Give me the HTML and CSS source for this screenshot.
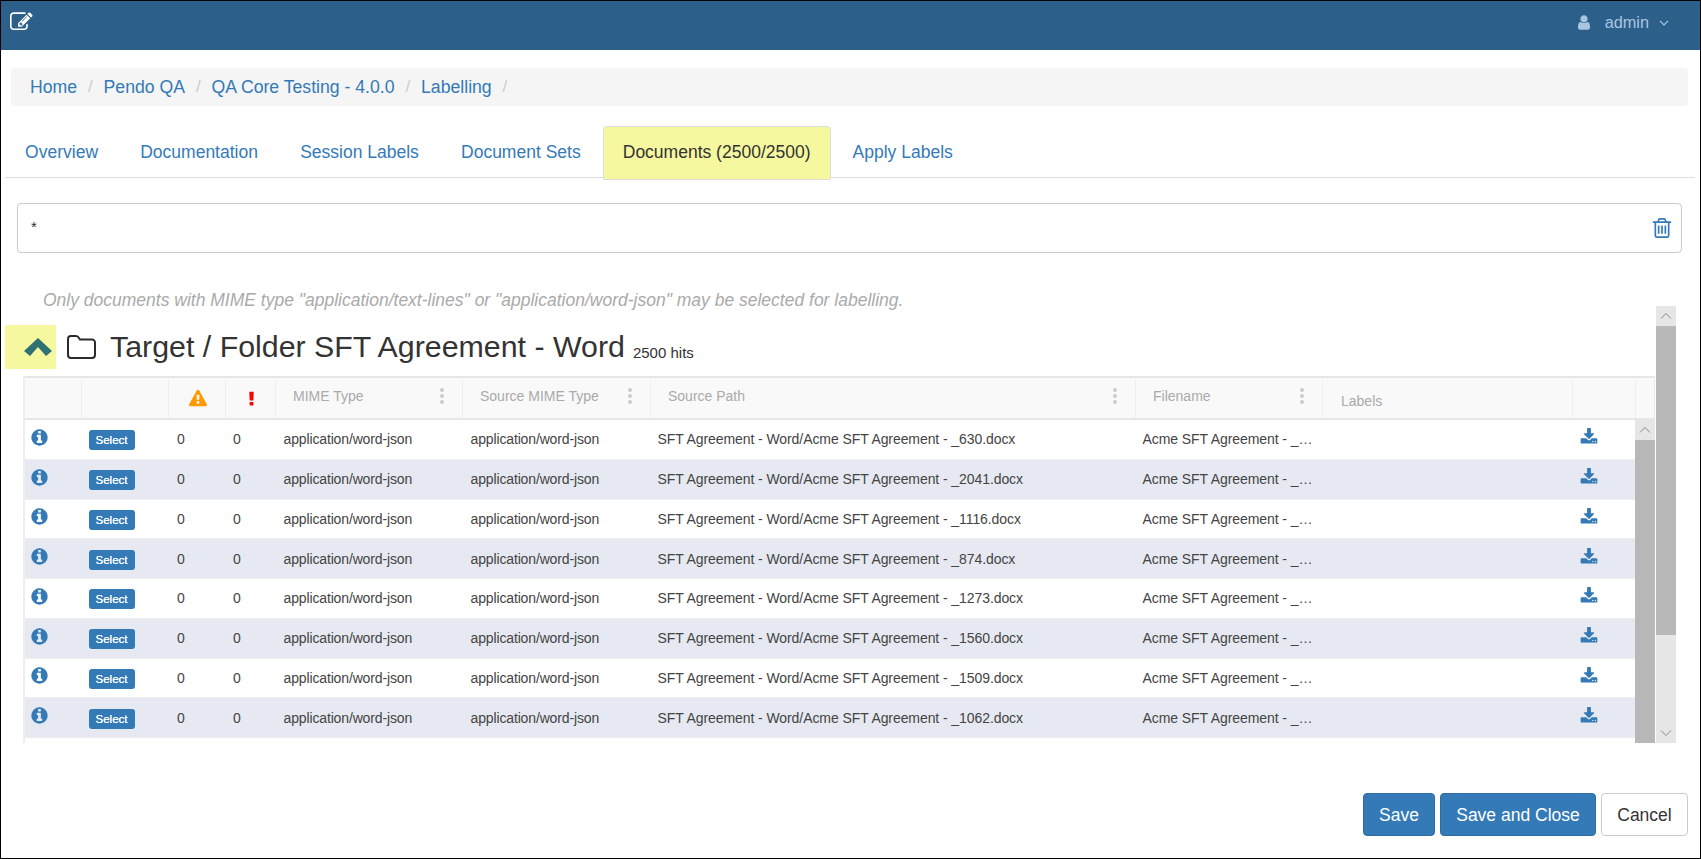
FILE: index.html
```html
<!DOCTYPE html>
<html lang="en">
<head>
<meta charset="utf-8">
<title>Labelling</title>
<link rel="stylesheet" href="styles.css">
</head>
<body>
<svg class="defs" aria-hidden="true">
  <symbol id="i-info" viewBox="0 0 1792 1792"><path d="M1152 1376v-160q0-14-9-23t-23-9h-96v-512q0-14-9-23t-23-9h-320q-14 0-23 9t-9 23v160q0 14 9 23t23 9h96v320h-96q-14 0-23 9t-9 23v160q0 14 9 23t23 9h448q14 0 23-9t9-23zm-128-896v-160q0-14-9-23t-23-9h-192q-14 0-23 9t-9 23v160q0 14 9 23t23 9h192q14 0 23-9t9-23zm640 416q0 209-103 385.5t-279.5 279.5-385.5 103-385.5-103-279.5-279.5-103-385.5 103-385.5 279.5-279.5 385.5-103 385.5 103 279.5 279.5 103 385.5z"/></symbol>
  <symbol id="i-down" viewBox="0 0 1792 1792"><path d="M1344 1344q0-26-19-45t-45-19-45 19-19 45 19 45 45 19 45-19 19-45zm256 0q0-26-19-45t-45-19-45 19-19 45 19 45 45 19 45-19 19-45zm128-224v320q0 40-28 68t-68 28h-1472q-40 0-68-28t-28-68v-320q0-40 28-68t68-28h465l135 136q58 56 136 56t136-56l136-136h464q40 0 68 28t28 68zm-325-569q17 41-14 70l-448 448q-18 19-45 19t-45-19l-448-448q-31-29-14-70 17-39 59-39h256v-448q0-26 19-45t45-19h256q26 0 45 19t19 45v448h256q42 0 59 39z"/></symbol>
  <symbol id="i-kebab" viewBox="0 0 6 18"><circle cx="3" cy="3" r="2"/><circle cx="3" cy="9" r="2"/><circle cx="3" cy="15" r="2"/></symbol>
  <symbol id="i-up" viewBox="0 0 12 8"><path d="M1 6.5 6 1.5l5 5" fill="none" stroke="currentColor" stroke-width="1"/></symbol>
  <symbol id="i-dn" viewBox="0 0 12 8"><path d="M1 1.5 6 6.5l5-5" fill="none" stroke="currentColor" stroke-width="1"/></symbol>
</svg>
<div class="frame">
  <header class="topbar">
    <svg class="ic-edit" viewBox="0 128 1900 1536"><path d="M888 1184l116-116-152-152-116 116v56h96v96h56zm440-720q-16-16-33 1l-350 350q-17 17-1 33t33-1l350-350q17-17 1-33zm80 594v190q0 119-84.5 203.5t-203.5 84.5h-832q-119 0-203.5-84.5t-84.5-203.5v-832q0-119 84.5-203.5t203.5-84.5h832q63 0 117 25 15 7 18 23 3 17-9 29l-49 49q-14 14-32 8-23-6-45-6h-832q-66 0-113 47t-47 113v832q0 66 47 113t113 47h832q66 0 113-47t47-113v-126q0-13 9-22l64-64q15-15 35-7t20 29zm-96-738l288 288-672 672h-288v-288zm444 132l-92 92-288-288 92-92q28-28 68-28t68 28l152 152q28 28 28 68t-28 68z"/></svg>
    <div class="user">
      <svg class="ic-user" viewBox="256 128 1280 1536"><path d="M1536 1399q0 109-62.5 187t-150.5 78h-854q-88 0-150.5-78t-62.5-187q0-85 8.5-160.5t31.5-152 58.5-131 94-89 134.5-34.5q131 128 313 128t313-128q76 0 134.5 34.5t94 89 58.5 131 31.5 152 8.5 160.5zm-256-887q0 159-112.5 271.5t-271.5 112.5-271.5-112.5-112.5-271.5 112.5-271.5 271.5-112.5 271.5 112.5 112.5 271.5z"/></svg>
      <span class="user-name">admin</span>
      <svg class="ic-caret" viewBox="0 0 10 6"><path d="M1 1 5 5l4-4" fill="none" stroke="currentColor" stroke-width="1.1"/></svg>
    </div>
  </header>

  <nav class="crumbs">
    <a class="crumb">Home</a><span class="sep">/</span>
    <a class="crumb">Pendo QA</a><span class="sep">/</span>
    <a class="crumb">QA Core Testing - 4.0.0</a><span class="sep">/</span>
    <a class="crumb">Labelling</a><span class="sep">/</span>
  </nav>

  <div class="tabs">
    <a class="tab">Overview</a>
    <a class="tab">Documentation</a>
    <a class="tab">Session Labels</a>
    <a class="tab">Document Sets</a>
    <a class="tab tab-active">Documents (2500/2500)</a>
    <a class="tab">Apply Labels</a>
  </div>

  <div class="query">
    <span class="query-text">*</span>
    <svg class="ic-trash" viewBox="128 128 1536 1536"><path d="M704 736v576q0 14-9 23t-23 9h-64q-14 0-23-9t-9-23v-576q0-14 9-23t23-9h64q14 0 23 9t9 23zm256 0v576q0 14-9 23t-23 9h-64q-14 0-23-9t-9-23v-576q0-14 9-23t23-9h64q14 0 23 9t9 23zm256 0v576q0 14-9 23t-23 9h-64q-14 0-23-9t-9-23v-576q0-14 9-23t23-9h64q14 0 23 9t9 23zm128 724v-948h-896v948q0 22 7 40.5t14.5 27 10.5 8.5h832q3 0 10.5-8.5t14.5-27 7-40.5zm-672-1076h448l-48-117q-7-9-17-11h-317q-10 2-17 11zm928 32v64q0 14-9 23t-23 9h-96v948q0 83-47 143.5t-113 60.5h-832q-66 0-113-58.5t-47-141.5v-952h-96q-14 0-23-9t-9-23v-64q0-14 9-23t23-9h309l70-167q15-37 54-63t79-26h320q40 0 79 26t54 63l70 167h309q14 0 23 9t9 23z"/></svg>
  </div>

  <p class="note">Only documents with MIME type "application/text-lines" or "application/word-json" may be selected for labelling.</p>

  <div class="results">
    <div class="results-main">
      <div class="section-head">
        <div class="toggle"><svg class="ic-chevron" viewBox="0 0 28 18"><path d="M0 13 14 0l14 13-6 5-8-9-8 9z"/></svg></div>
        <svg class="ic-folder" viewBox="0 0 29 24"><path d="M1 4a3 3 0 0 1 3-3h5c1.5 0 2.5 1 3 2l1 1.500h12a3 3 0 0 1 3 3V20a3 3 0 0 1-3 3H4a3 3 0 0 1-3-3z" fill="none" stroke="currentColor" stroke-width="2"/></svg>
        <h2 class="title">Target / Folder SFT Agreement - Word</h2>
        <span class="hits">2500 hits</span>
      </div>

      <div class="grid">
        <div class="grid-head">
          <div class="th"></div>
          <div class="th"></div>
          <div class="th th-icon"><svg class="ic-warn" viewBox="0 64 1792 1664"><path d="M1024 1375v-190q0-14-9.5-23.5t-22.5-9.5h-192q-13 0-22.5 9.5t-9.5 23.5v190q0 14 9.5 23.5t22.5 9.5h192q13 0 22.5-9.5t9.5-23.5zm-2-374l18-459q0-12-10-19-13-11-24-11h-220q-11 0-24 11-10 7-10 21l17 457q0 10 10 16.5t24 6.5h185q14 0 23.5-6.5t10.5-16.5zm-14-934l768 1408q35 63-2 126-17 29-46.5 46t-63.5 17h-1536q-34 0-63.5-17t-46.5-46q-37-63-2-126l768-1408q17-31 47-49t65-18 65 18 47 49z"/></svg></div>
          <div class="th th-icon"><svg class="ic-bang" viewBox="640 128 512 1408"><path d="M1088 1248v224q0 26-19 45t-45 19h-256q-26 0-45-19t-19-45v-224q0-26 19-45t45-19h256q26 0 45 19t19 45zm30-1056l-28 768q-1 26-20.5 45t-45.5 19h-256q-26 0-45.5-19t-20.5-45l-28-768q-1-26 17.5-45t44.5-19h320q26 0 44.5 19t17.5 45z"/></svg></div>
          <div class="th th-col"><span>MIME Type</span><svg class="ic-kebab"><use href="#i-kebab"/></svg></div>
          <div class="th th-col"><span>Source MIME Type</span><svg class="ic-kebab"><use href="#i-kebab"/></svg></div>
          <div class="th th-col"><span>Source Path</span><svg class="ic-kebab"><use href="#i-kebab"/></svg></div>
          <div class="th th-col"><span>Filename</span><svg class="ic-kebab"><use href="#i-kebab"/></svg></div>
          <div class="th th-labels">Labels</div>
          <div class="th"></div>
          <div class="th"></div>
        </div>
        <div class="grid-body">
          <div class="rows">
            <div class="row"><span class="c c-info"><svg class="ic-info"><use href="#i-info"/></svg></span><span class="c"><a class="select">Select</a></span><span class="c c-n">0</span><span class="c c-n2">0</span><span class="c">application/word-json</span><span class="c">application/word-json</span><span class="c c-path">SFT Agreement - Word/Acme SFT Agreement - _630.docx</span><span class="c c-name">Acme SFT Agreement - _…</span><span class="c"></span><span class="c c-dl"><svg class="ic-down"><use href="#i-down"/></svg></span></div>
            <div class="row"><span class="c c-info"><svg class="ic-info"><use href="#i-info"/></svg></span><span class="c"><a class="select">Select</a></span><span class="c c-n">0</span><span class="c c-n2">0</span><span class="c">application/word-json</span><span class="c">application/word-json</span><span class="c c-path">SFT Agreement - Word/Acme SFT Agreement - _2041.docx</span><span class="c c-name">Acme SFT Agreement - _…</span><span class="c"></span><span class="c c-dl"><svg class="ic-down"><use href="#i-down"/></svg></span></div>
            <div class="row"><span class="c c-info"><svg class="ic-info"><use href="#i-info"/></svg></span><span class="c"><a class="select">Select</a></span><span class="c c-n">0</span><span class="c c-n2">0</span><span class="c">application/word-json</span><span class="c">application/word-json</span><span class="c c-path">SFT Agreement - Word/Acme SFT Agreement - _1116.docx</span><span class="c c-name">Acme SFT Agreement - _…</span><span class="c"></span><span class="c c-dl"><svg class="ic-down"><use href="#i-down"/></svg></span></div>
            <div class="row"><span class="c c-info"><svg class="ic-info"><use href="#i-info"/></svg></span><span class="c"><a class="select">Select</a></span><span class="c c-n">0</span><span class="c c-n2">0</span><span class="c">application/word-json</span><span class="c">application/word-json</span><span class="c c-path">SFT Agreement - Word/Acme SFT Agreement - _874.docx</span><span class="c c-name">Acme SFT Agreement - _…</span><span class="c"></span><span class="c c-dl"><svg class="ic-down"><use href="#i-down"/></svg></span></div>
            <div class="row"><span class="c c-info"><svg class="ic-info"><use href="#i-info"/></svg></span><span class="c"><a class="select">Select</a></span><span class="c c-n">0</span><span class="c c-n2">0</span><span class="c">application/word-json</span><span class="c">application/word-json</span><span class="c c-path">SFT Agreement - Word/Acme SFT Agreement - _1273.docx</span><span class="c c-name">Acme SFT Agreement - _…</span><span class="c"></span><span class="c c-dl"><svg class="ic-down"><use href="#i-down"/></svg></span></div>
            <div class="row"><span class="c c-info"><svg class="ic-info"><use href="#i-info"/></svg></span><span class="c"><a class="select">Select</a></span><span class="c c-n">0</span><span class="c c-n2">0</span><span class="c">application/word-json</span><span class="c">application/word-json</span><span class="c c-path">SFT Agreement - Word/Acme SFT Agreement - _1560.docx</span><span class="c c-name">Acme SFT Agreement - _…</span><span class="c"></span><span class="c c-dl"><svg class="ic-down"><use href="#i-down"/></svg></span></div>
            <div class="row"><span class="c c-info"><svg class="ic-info"><use href="#i-info"/></svg></span><span class="c"><a class="select">Select</a></span><span class="c c-n">0</span><span class="c c-n2">0</span><span class="c">application/word-json</span><span class="c">application/word-json</span><span class="c c-path">SFT Agreement - Word/Acme SFT Agreement - _1509.docx</span><span class="c c-name">Acme SFT Agreement - _…</span><span class="c"></span><span class="c c-dl"><svg class="ic-down"><use href="#i-down"/></svg></span></div>
            <div class="row"><span class="c c-info"><svg class="ic-info"><use href="#i-info"/></svg></span><span class="c"><a class="select">Select</a></span><span class="c c-n">0</span><span class="c c-n2">0</span><span class="c">application/word-json</span><span class="c">application/word-json</span><span class="c c-path">SFT Agreement - Word/Acme SFT Agreement - _1062.docx</span><span class="c c-name">Acme SFT Agreement - _…</span><span class="c"></span><span class="c c-dl"><svg class="ic-down"><use href="#i-down"/></svg></span></div>
          </div>
          <div class="sb sb-inner">
            <div class="sb-btn"><svg class="ic-sb"><use href="#i-up"/></svg></div>
            <div class="sb-thumb"></div>
          </div>
        </div>
      </div>
    </div>
    <div class="sb sb-outer">
      <div class="sb-btn"><svg class="ic-sb"><use href="#i-up"/></svg></div>
      <div class="sb-thumb sb-thumb-outer"></div>
      <div class="sb-track"></div>
      <div class="sb-btn"><svg class="ic-sb"><use href="#i-dn"/></svg></div>
    </div>
  </div>

  <footer class="actions">
    <a class="btn btn-primary">Save</a>
    <a class="btn btn-primary">Save and Close</a>
    <a class="btn btn-default">Cancel</a>
  </footer>
</div>
</body>
</html>
```

FILE: styles.css
```css
* { box-sizing: border-box; }
html, body { margin: 0; padding: 0; background: #fff; }
body { font-family: "Liberation Sans", Arial, sans-serif; color: #333; overflow: hidden; }
.defs { display: none; }
svg { display: block; fill: currentColor; }
a { color: #337ab7; text-decoration: none; }

.frame { width: 1701px; height: 859px; border: 1px solid #000; display: flex; flex-direction: column; }

.topbar { height: 49px; flex: none; background: #2c5f8a; display: flex; align-items: flex-start; justify-content: space-between; padding: 0 31px 0 9px; }
.ic-edit { width: 24px; height: 20px; margin-top: 11px; color: #fff; }
.user { display: flex; align-items: center; height: 43px; color: #a9c5e2; }
.ic-user { width: 12px; height: 15px; margin-right: 15px; }
.user-name { font-size: 16.3px; margin-right: 10px; }
.ic-caret { width: 10px; height: 6px; }

.crumbs { height: 38px; flex: none; margin: 18px 12px 0 10px; background: #f5f5f5; border-radius: 4px; padding: 0 19px; display: flex; align-items: center; font-size: 17.65px; }
.sep { color: #ccc; margin: 0 10.9px; font-size: 17px; }

.tabs { height: 52px; flex: none; margin: 20px 5px 0 4px; border-bottom: 1px solid #ddd; display: flex; gap: 2px; font-size: 17.5px; }
.tab { padding: 2px 20.1px 0; height: 51px; display: flex; align-items: center; line-height: 1; }
.tab-active { height: 54px; padding: 0 19px; color: #333; background: #f5f89f; border: 1px solid #ddd; border-radius: 4px 4px 0 0; }

.query { height: 50px; flex: none; margin: 25px 18px 0 16px; border: 1px solid #ccc; border-radius: 4px; display: flex; align-items: center; justify-content: space-between; padding: 0 9px 0 13px; font-size: 15px; }
.query-text { margin-top: -3px; }
.ic-trash { width: 20px; height: 20px; color: #337ab7; margin-top: -1px; }

.note { height: 33px; flex: none; margin: 20px 0 0 42px; font-size: 17.5px; font-style: italic; color: #aaa; line-height: 54px; white-space: nowrap; overflow: visible; }

.results { height: 437px; flex: none; display: flex; padding-right: 24px; }
.results-main { flex: 1; padding-top: 19px; min-width: 0; display: flex; flex-direction: column; }

.section-head { height: 44px; flex: none; margin-left: 4px; display: flex; align-items: center; }
.toggle { width: 51px; height: 44px; background: #f5f89f; display: flex; align-items: center; justify-content: center; padding: 0 0 0 15px; }
.ic-chevron { width: 28px; height: 18px; flex: none; color: #2f7272; }
.ic-folder { width: 29px; height: 24px; margin-left: 11px; color: #2b2b2b; }
.title { margin: 1px 8px 0 14px; font-size: 30.35px; font-weight: 400; color: #333; line-height: 1; white-space: nowrap; }
.hits { font-size: 15px; margin-top: 11px; }

.grid { margin: 7px 0 0 22px; flex: 1; min-height: 0; display: flex; flex-direction: column; border-left: 2px solid #eee; }
.grid-head { height: 44px; flex: none; display: grid; grid-template-columns: 57px 87px 57px 50px 187px 188px 485px 187px 250px 63px 19px; background: #f9f9f9; border-top: 2px solid #e6e6e6; border-bottom: 2px solid #e6e6e6; font-size: 14px; color: #aaa; }
.th { border-right: 1.5px solid #eee; display: flex; align-items: center; min-width: 0; margin-top: 2px; }
.th:last-child { border-right: 1px solid #e6e6e6; }
.th-icon { justify-content: center; padding-left: 2px; }
.th-col { justify-content: space-between; padding: 0 17px 6px 17px; }
.th-labels { padding: 3px 0 0 18px; }
.ic-warn { width: 18px; height: 17px; color: #f90; margin-bottom: 2px; }
.ic-bang { width: 5px; height: 15px; color: #f00; margin-bottom: 2px; }
.ic-kebab { width: 6px; height: 18px; color: #ccc; }

.grid-body { flex: 1; min-height: 0; display: flex; }
.rows { flex: 1; min-width: 0; display: flex; flex-direction: column; }
.row { height: 39.75px; flex: none; display: grid; grid-template-columns: 57px 87px 57px 50px 187px 187px 485px 186px 252px 62px; border-bottom: 1px solid #eee; font-size: 14px; color: #444; }
.row:nth-child(even) { background: #e6e9f1; }
.c { display: flex; align-items: center; padding: 0 7.5px; white-space: nowrap; min-width: 0; letter-spacing: -.14px; }
.c-path { letter-spacing: -.08px; }
.c-name { letter-spacing: -.08px; }
.c-n { padding-left: 8px; }
.c-n2 { padding-left: 7px; }
.c-info { padding-left: 5px; }
.c-dl { padding-left: 7px; }
.ic-info { width: 19px; height: 19px; color: #337ab7; margin-top: -4px; }
.ic-down { width: 18px; height: 18px; color: #337ab7; margin-top: -4px; }
.select { background: #337ab7; color: #fff; font-size: 11.5px; width: 46px; height: 20px; border-radius: 3px; display: flex; align-items: center; justify-content: center; letter-spacing: 0; margin-left: -1px; margin-top: 2px; text-shadow: 0 0 .3px #fff; }

.sb { width: 20px; flex: none; display: flex; flex-direction: column; background: #e6e6e6; color: #888; }
.sb-inner { background: #b8b8b8; }
.sb-outer { margin-left: 1px; }
.sb-btn { height: 20px; flex: none; background: #e6e6e6; display: flex; align-items: center; justify-content: center; }
.sb-thumb { flex: 1; background: #b8b8b8; }
.sb-thumb-outer { flex: 0 0 309px; }
.sb-track { flex: 1; }
.ic-sb { width: 12px; height: 8px; }

.actions { flex: none; margin: 50px 12px 0 0; display: flex; justify-content: flex-end; gap: 5px; }
.btn { height: 43px; padding-top: 2px; border-radius: 4px; display: flex; align-items: center; justify-content: center; font-size: 17.5px; border: 1px solid transparent; }
.btn-primary { background: #337ab7; border-color: #2e6da4; color: #fff; }
.btn-primary:nth-child(1) { width: 72px; }
.btn-primary:nth-child(2) { width: 156px; }
.btn-default { width: 87px; background: #fff; border-color: #ccc; color: #333; }
```
